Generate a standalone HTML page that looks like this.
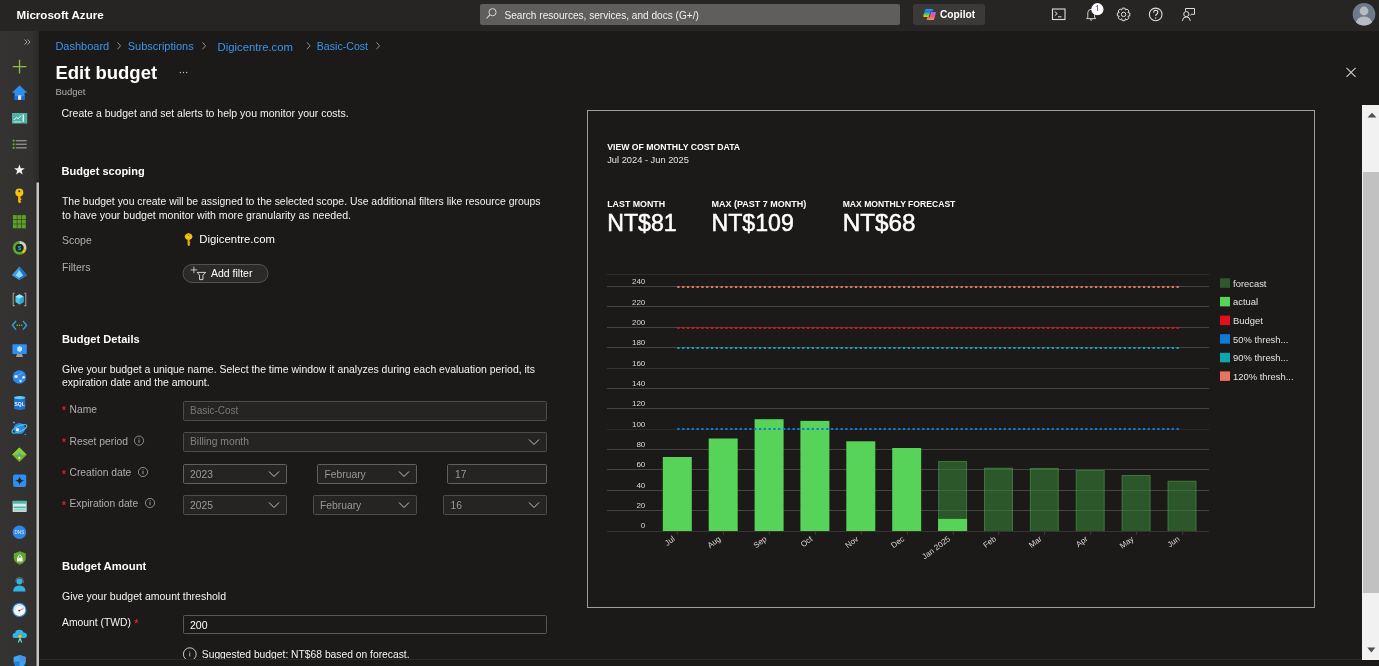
<!DOCTYPE html>
<html><head><meta charset="utf-8"><title>Edit budget - Microsoft Azure</title>
<style>html,body{margin:0;padding:0;background:#1b1a19;overflow:hidden;}svg{display:block;font-family:"Liberation Sans", sans-serif;will-change:transform;}</style></head>
<body><svg width="1379" height="666" viewBox="0 0 1379 666">
<rect x="0" y="0" width="1379" height="666" fill="#1b1a19"/>
<rect x="0" y="0" width="1379" height="31" fill="#262524"/>
<text x="16.5" y="19" font-size="11.6" fill="#fff" font-weight="bold" text-anchor="start" >Microsoft Azure</text>
<rect x="480" y="4" width="420" height="21" rx="2" fill="#605e5c"/>
<circle cx="492.5" cy="12.2" r="3.6" fill="none" stroke="#d8d6d4" stroke-width="1"/>
<line x1="489.8" y1="14.9" x2="486.5" y2="18.5" stroke="#d8d6d4" stroke-width="1.1"/>
<text x="504.5" y="18.5" font-size="10.1" fill="#f2f1f0" font-weight="normal" text-anchor="start" >Search resources, services, and docs (G+/)</text>
<rect x="913" y="4" width="72" height="21" rx="3" fill="#3b3a39"/>
<defs><linearGradient id="cpl" x1="0" y1="0" x2="0" y2="1"><stop offset="0" stop-color="#1aa8f5"/><stop offset="0.3" stop-color="#0f7ae0"/><stop offset="0.6" stop-color="#3cc070"/><stop offset="1" stop-color="#f2d400"/></linearGradient><linearGradient id="cpr" x1="0" y1="0" x2="0" y2="1"><stop offset="0" stop-color="#b05cf0"/><stop offset="0.5" stop-color="#f0509a"/><stop offset="1" stop-color="#f59a40"/></linearGradient></defs>
<path d="M926.2 9 L932 9 Q933 9.2 933.4 10.8 L930.6 11.8 L928.6 17.1 L923.8 17.1 Q923 16.9 923.3 15.6 L925 10.2 Q925.4 9 926.2 9 Z" fill="url(#cpl)"/>
<path d="M931 11.9 L935.3 11.9 Q936.1 12.2 935.9 13.2 L934.1 19.2 Q933.7 20.1 932.8 20.1 L927.3 20.1 Q926.5 19.9 926.8 19 L927.5 17.3 L929.6 17.3 Z" fill="url(#cpr)"/>
<text x="940" y="18.1" font-size="10.2" fill="#fff" font-weight="bold" text-anchor="start" >Copilot</text>
<rect x="1052.5" y="9" width="12.5" height="10.5" fill="none" stroke="#e0dedc" stroke-width="1.1"/>
<path d="M1054.8 11.6 L1057.3 13.6 L1054.8 15.6" fill="none" stroke="#e0dedc" stroke-width="1"/>
<line x1="1058" y1="16.8" x2="1061.5" y2="16.8" stroke="#e0dedc" stroke-width="1"/>
<path d="M1086.5 18.6 L1087.8 17.6 L1087.8 12.5 Q1088.2 9.5 1091 9.3 Q1093.8 9.5 1094.6 12.5 L1094.6 17.6 L1095.9 18.6 Z" fill="none" stroke="#e0dedc" stroke-width="0.9"/>
<path d="M1090 19.5 Q1091.2 21 1092.4 19.5" fill="none" stroke="#e0dedc" stroke-width="1"/>
<circle cx="1097.4" cy="9.2" r="6.1" fill="#fff"/>
<path d="M1097.5 5.3 V11 M1097.5 5.5 L1096 6.6" fill="none" stroke="#4b3a8a" stroke-width="0.75"/>
<polygon points="1127.93,12.57 1129.85,13.00 1129.85,15.80 1127.93,16.23 1127.96,16.17 1129.00,17.83 1127.03,19.80 1125.37,18.76 1125.43,18.73 1125.00,20.65 1122.20,20.65 1121.77,18.73 1121.83,18.76 1120.17,19.80 1118.20,17.83 1119.24,16.17 1119.27,16.23 1117.35,15.80 1117.35,13.00 1119.27,12.57 1119.24,12.63 1118.20,10.97 1120.17,9.00 1121.83,10.04 1121.77,10.07 1122.20,8.15 1125.00,8.15 1125.43,10.07 1125.37,10.04 1127.03,9.00 1129.00,10.97 1127.96,12.63" fill="none" stroke="#e0dedc" stroke-width="1" stroke-linejoin="round"/>
<circle cx="1123.6" cy="14.4" r="2.2" fill="none" stroke="#e0dedc" stroke-width="1"/>
<circle cx="1155.7" cy="14.4" r="6.3" fill="none" stroke="#e0dedc" stroke-width="1.1"/>
<path d="M1153.6 12.6 Q1153.8 10.3 1155.8 10.3 Q1157.9 10.4 1157.9 12.4 Q1157.8 13.8 1156.3 14.5 Q1155.7 14.9 1155.7 16" fill="none" stroke="#e0dedc" stroke-width="1.1"/>
<circle cx="1155.7" cy="18" r="0.7" fill="#e0dedc"/>
<path d="M1185.5 10.8 V8.5 H1194.5 V14.3 H1191.2 L1190.2 15.6" fill="none" stroke="#e0dedc" stroke-width="1"/>
<circle cx="1186.3" cy="14.1" r="2.6" fill="none" stroke="#e0dedc" stroke-width="1"/>
<path d="M1182.4 20.9 Q1182.7 16.9 1186.3 16.9 Q1189.9 16.9 1190.3 20.9" fill="none" stroke="#e0dedc" stroke-width="1"/>
<circle cx="1364" cy="14.3" r="11.3" fill="#6e7a8a"/>
<clipPath id="av"><circle cx="1364" cy="14.3" r="11.3"/></clipPath>
<g clip-path="url(#av)"><circle cx="1364" cy="11" r="4.4" fill="#b8bcc1"/><ellipse cx="1364" cy="24" rx="8.3" ry="7.5" fill="#b8bcc1"/></g>
<defs><linearGradient id="sg" x1="0" x2="1" y1="0" y2="0"><stop offset="0" stop-color="#343331"/><stop offset="0.82" stop-color="#32312f"/><stop offset="1" stop-color="#2a2928"/></linearGradient></defs>
<rect x="0" y="31" width="39" height="635" fill="url(#sg)"/>
<rect x="36.5" y="182.5" width="2.5" height="484" fill="#c8c6c4"/>
<path d="M24.5 39.5 L27 42 L24.5 44.5 M27.5 39.5 L30 42 L27.5 44.5" fill="none" stroke="#a19f9d" stroke-width="1"/>
<path d="M12.7 66.6 H26.4 M19.55 59.7 V73.6" stroke="#8cbf3f" stroke-width="1.3"/>
<path d="M19.6 85.2 L27.3 92.8 L24.6 92.8 L24.6 99.8 L14.6 99.8 L14.6 92.8 L11.9 92.8 Z" fill="#2f8df0"/>
<path d="M14.6 96 L24.6 96 L24.6 99.8 L14.6 99.8 Z" fill="#1d6dd0"/>
<rect x="18.1" y="95.3" width="3" height="4.5" fill="#e8e6e4"/>
<rect x="12" y="113" width="15.2" height="10.5" fill="#4fb3a3"/>
<path d="M13.8 120 L16.5 117.3 L18.2 118.8 L21 115.5" fill="none" stroke="#fff" stroke-width="0.9"/>
<rect x="22.6" y="114.5" width="1.4" height="7.5" fill="#e4f4f0"/><rect x="13.5" y="121.5" width="7.5" height="0.9" fill="#d0ece6"/>
<circle cx="13.6" cy="140.7" r="1.1" fill="#5fb32a"/>
<rect x="15.7" y="140.0" width="11" height="1.4" fill="#8f8d8b"/>
<circle cx="13.6" cy="144.3" r="1.1" fill="#5fb32a"/>
<rect x="15.7" y="143.60000000000002" width="11" height="1.4" fill="#8f8d8b"/>
<circle cx="13.6" cy="147.8" r="1.1" fill="#5fb32a"/>
<rect x="15.7" y="147.10000000000002" width="11" height="1.4" fill="#8f8d8b"/>
<polygon points="19.40,164.40 20.75,168.14 24.73,168.27 21.59,170.71 22.69,174.53 19.40,172.30 16.11,174.53 17.21,170.71 14.07,168.27 18.05,168.14" fill="#f4f3f2"/>
<circle cx="19.3" cy="192.6" r="4" fill="#f5c211"/><circle cx="19.3" cy="191.2" r="1" fill="#302f2e"/>
<path d="M18.1 195.5 L20.5 195.5 L20.5 198.3 L21.8 199.3 L20.5 200.3 L20.5 201 L21.5 202 L19.3 203.2 L18.1 202 Z" fill="#f5b800"/>
<rect x="12.9" y="215.1" width="3.9" height="4" fill="#5da224"/>
<rect x="12.9" y="219.7" width="3.9" height="4" fill="#5da224"/>
<rect x="12.9" y="224.3" width="3.9" height="4" fill="#5da224"/>
<rect x="17.4" y="215.1" width="3.9" height="4" fill="#5da224"/>
<rect x="17.4" y="219.7" width="3.9" height="4" fill="#5da224"/>
<rect x="17.4" y="224.3" width="3.9" height="4" fill="#5da224"/>
<rect x="21.9" y="215.1" width="3.9" height="4" fill="#5da224"/>
<rect x="21.9" y="219.7" width="3.9" height="4" fill="#5da224"/>
<rect x="21.9" y="224.3" width="3.9" height="4" fill="#5da224"/>
<circle cx="19.6" cy="247.8" r="5.5" fill="none" stroke="#5ba82a" stroke-width="2.8"/>
<path d="M19.6 242.3 A5.5 5.5 0 0 1 24.9 249.2" fill="none" stroke="#d0cecc" stroke-width="2.8"/>
<path d="M24.9 249.2 A5.5 5.5 0 0 1 22.5 252.4" fill="none" stroke="#f2c200" stroke-width="2.8"/>
<circle cx="19.6" cy="247.8" r="3.9" fill="#1d2a2a"/>
<text x="19.6" y="250" font-size="5.5" fill="#2ec0c0" text-anchor="middle" font-weight="bold">$</text>
<path d="M19.4 266.5 L27 275.3 L19.4 280 L11.8 275.3 Z" fill="#3ea0e6"/>
<path d="M19.4 266.5 L27 275.3 L19.4 280 Z" fill="#1f6fc8"/>
<path d="M19.4 270 L23.2 275.5 L19.4 277.8 L15.6 275.5 Z" fill="#8fdcf5"/>
<path d="M14.8 293.2 L13.2 293.2 L13.2 305.6 L14.8 305.6 M24.2 293.2 L25.8 293.2 L25.8 305.6 L24.2 305.6" fill="none" stroke="#9b9997" stroke-width="1.1"/>
<path d="M19.5 294.2 L23.5 296.5 L23.5 302 L19.5 304.5 L15.5 302 L15.5 296.5 Z" fill="#50c8ee"/>
<path d="M15.5 296.5 L19.5 298.8 L23.5 296.5 L19.5 294.2 Z" fill="#9be6f8"/>
<path d="M19.5 298.8 L23.5 296.5 L23.5 302 L19.5 304.5 Z" fill="#2ea8dc"/>
<path d="M16 321 L12.4 325.3 L16 329.6 M23 321 L26.6 325.3 L23 329.6" fill="none" stroke="#2aa3ea" stroke-width="1.4"/>
<circle cx="17.2" cy="325.3" r="0.8" fill="#86c03a"/>
<circle cx="19.5" cy="325.3" r="0.8" fill="#86c03a"/>
<circle cx="21.8" cy="325.3" r="0.8" fill="#86c03a"/>
<rect x="12.4" y="344.2" width="14.4" height="9.8" rx="0.8" fill="#2f8ff0"/>
<path d="M17 354 L22 354 L23 357 L16 357 Z" fill="#a19f9d"/>
<path d="M19.6 346 L22 347.4 L22 350.5 L19.6 352 L17.2 350.5 L17.2 347.4 Z" fill="#b8eaf8"/>
<circle cx="19.4" cy="377" r="6.8" fill="#2d86e8"/>
<path d="M16.2 376.5 L22.5 372.5 M16.2 376.5 L20.5 380.8 L23.8 376.8" fill="none" stroke="#8fc8f8" stroke-width="0.6"/>
<circle cx="16" cy="376.5" r="1.6" fill="#e8f2fc"/><circle cx="23.6" cy="377.3" r="1.2" fill="#e8f2fc"/><circle cx="20.5" cy="381.2" r="1.1" fill="#e8f2fc"/>
<path d="M14 397.5 L14 408.5 Q19.6 411.5 25.3 408.5 L25.3 397.5 Z" fill="#1f6fd0"/>
<ellipse cx="19.65" cy="397.6" rx="5.65" ry="1.6" fill="#5ad0f0"/>
<text x="19.6" y="406" font-size="5" fill="#f4f4f4" text-anchor="middle" font-weight="bold">SQL</text>
<circle cx="19.4" cy="428.5" r="5.6" fill="#2e86e6"/>
<ellipse cx="19.4" cy="428.8" rx="8" ry="2.8" transform="rotate(-25 19.4 428.8)" fill="none" stroke="#45c0ea" stroke-width="1.1"/>
<circle cx="17.5" cy="429.8" r="1.8" fill="#e8f2fc"/><circle cx="14" cy="422.5" r="0.9" fill="#45c0ea"/><circle cx="25.2" cy="434.4" r="0.7" fill="#45c0ea"/>
<path d="M19.4 447.5 L26.7 454.8 L19.4 462.1 L12.1 454.8 Z" fill="#6fb42c"/>
<path d="M19.4 447.5 L26.7 454.8 L19.4 454.8 L12.1 454.8 Z" fill="#8ccc3a"/>
<circle cx="19.4" cy="454.2" r="1.5" fill="#4aa0f0"/><circle cx="19.4" cy="457.8" r="1.1" fill="#f0f0f0"/>
<rect x="13.1" y="474.5" width="13.1" height="12.4" rx="1.8" fill="#2f8ff0"/>
<path d="M19.65 476.5 Q20.2 480.2 24.2 480.7 Q20.2 481.2 19.65 485 Q19.1 481.2 15.1 480.7 Q19.1 480.2 19.65 476.5 Z" fill="#252423"/>
<rect x="12.7" y="500.9" width="13.9" height="11" fill="#e8e6e4"/>
<rect x="12.7" y="500.9" width="13.9" height="2.8" fill="#3cbfae"/>
<rect x="13.6" y="506.5" width="12.1" height="1.6" fill="#3cbfae"/><rect x="13.6" y="508.6" width="12.1" height="2.3" fill="#9ad8cf"/>
<circle cx="19.4" cy="532.2" r="6.8" fill="#2d86e8"/>
<text x="19.4" y="534" font-size="4.6" fill="#e6f0fa" text-anchor="middle">DNS</text>
<path d="M19.8 551.3 L25.8 553.5 L25.8 558.5 Q25.3 562.5 19.8 564.8 Q14.3 562.5 13.8 558.5 L13.8 553.5 Z" fill="#5fa82a"/>
<rect x="17" y="557.5" width="5.6" height="4" fill="#f4f4f4"/><path d="M18.2 557.5 L18.2 556 Q19.8 553.8 21.4 556 L21.4 557.5" fill="none" stroke="#f4f4f4" stroke-width="0.9"/>
<circle cx="19.4" cy="581.5" r="3" fill="#32b4e0"/>
<path d="M13.1 591.6 Q13.3 585.8 19.4 585.6 Q25.5 585.8 25.5 591.6 Z" fill="#32b4e0"/>
<path d="M15.6 581.5 Q15.8 577.5 19.4 577.4 Q23.2 577.5 23.4 581.5 L23.4 583" fill="none" stroke="#8a8886" stroke-width="0.7"/>
<circle cx="19.4" cy="610" r="6.6" fill="#f8f8f8" stroke="#2b8ae8" stroke-width="1.1"/>
<path d="M14.8 610 A4.6 4.6 0 0 1 23.5 608" fill="none" stroke="#8cc8f0" stroke-width="1" stroke-dasharray="1 0.8"/>
<line x1="19.2" y1="610.6" x2="23.5" y2="608.6" stroke="#e8404a" stroke-width="0.8"/><circle cx="19.2" cy="610.6" r="0.9" fill="#333"/>
<path d="M14.5 638 Q12.2 637.8 12.6 635 Q13 632.8 15.2 633 Q15.5 629.6 19.5 629.7 Q23 629.8 23.5 632.6 Q26.9 632.8 27 635.4 Q26.9 638 24.5 638 Z" fill="#32b6e6"/>
<path d="M19.2 638 L17.8 642.6 L19 642.6 L20 640 L21 642.6 L22.2 642.6 L20.8 638 Z" fill="#5ee0c8"/>
<circle cx="20" cy="636.3" r="2" fill="#f5c400" stroke="#1f8ee0" stroke-width="0.5"/>
<path d="M19.65 654.9 L25.7 657 L25.7 662 Q25.3 666 19.65 668.5 Q14 666 13.6 662 L13.6 657 Z" fill="#3aa8ee"/>
<path d="M19.65 654.9 L25.7 657 L25.7 661.5 L19.65 661.5 Z" fill="#4f8ee8"/><path d="M13.6 661.5 L19.65 661.5 L19.65 668.5 Q14 666 13.6 662 Z" fill="#2a78d8"/>
<text x="55.4" y="50.3" font-size="11" fill="#3c95ec" font-weight="normal" text-anchor="start" >Dashboard</text>
<text x="127.7" y="50.3" font-size="11" fill="#3c95ec" font-weight="normal" text-anchor="start" >Subscriptions</text>
<text x="217.6" y="51.3" font-size="11.3" fill="#3c95ec" font-weight="normal" text-anchor="start" >Digicentre.com</text>
<text x="316.8" y="50.3" font-size="10.6" fill="#3c95ec" font-weight="normal" text-anchor="start" >Basic-Cost</text>
<path d="M117.5 42.3 L120.5 45.8 L117.5 49.3" fill="none" stroke="#a19f9d" stroke-width="0.9"/>
<path d="M202.5 42.3 L205.5 45.8 L202.5 49.3" fill="none" stroke="#a19f9d" stroke-width="0.9"/>
<path d="M307 42.3 L310 45.8 L307 49.3" fill="none" stroke="#a19f9d" stroke-width="0.9"/>
<path d="M376.5 42.3 L379.5 45.8 L376.5 49.3" fill="none" stroke="#a19f9d" stroke-width="0.9"/>
<text x="55.4" y="78.9" font-size="18.5" fill="#fff" font-weight="bold" text-anchor="start" >Edit budget</text>
<circle cx="180.3" cy="72.5" r="0.65" fill="#c8c6c4"/>
<circle cx="183.5" cy="72.5" r="0.65" fill="#c8c6c4"/>
<circle cx="186.7" cy="72.5" r="0.65" fill="#c8c6c4"/>
<text x="55.4" y="95" font-size="9.5" fill="#b0aeac" font-weight="normal" text-anchor="start" >Budget</text>
<path d="M1346.5 67.8 L1355.6 76.9 M1355.6 67.8 L1346.5 76.9" stroke="#d0cecc" stroke-width="1.1"/>
<text x="61.5" y="117.4" font-size="10.5" fill="#f4f3f2" font-weight="normal" text-anchor="start" >Create a budget and set alerts to help you monitor your costs.</text>
<text x="61.5" y="175" font-size="11" fill="#fff" font-weight="bold" text-anchor="start" >Budget scoping</text>
<text x="62" y="205.2" font-size="10.43" fill="#f4f3f2" font-weight="normal" text-anchor="start" >The budget you create will be assigned to the selected scope. Use additional filters like resource groups</text>
<text x="62" y="219" font-size="10.62" fill="#f4f3f2" font-weight="normal" text-anchor="start" >to have your budget monitor with more granularity as needed.</text>
<text x="62" y="244.4" font-size="10.5" fill="#b0aeac" font-weight="normal" text-anchor="start" >Scope</text>
<path d="M188.6 233 L191.4 234.2 L192.6 236.6 L191.4 239 L188.6 240.2 L185.8 239 L184.6 236.6 L185.8 234.2 Z" fill="#f5c211"/><circle cx="188.6" cy="235.3" r="0.8" fill="#8a6a00"/>
<path d="M187.6 239.5 L189.6 239.5 L189.6 242 L190.6 242.8 L189.6 243.6 L189.6 244.2 L190.4 245 L188.6 246 L187.6 245 Z" fill="#f0b400"/>
<text x="199.3" y="243.3" font-size="11.35" fill="#fff" font-weight="normal" text-anchor="start" >Digicentre.com</text>
<text x="62" y="270.5" font-size="10.5" fill="#b0aeac" font-weight="normal" text-anchor="start" >Filters</text>
<rect x="183" y="264.5" width="85" height="18" rx="9" fill="#2b2a29" stroke="#5a5856" stroke-width="0.9"/>
<path d="M193.9 266.6 V273.2 M190.6 269.9 H197.2" stroke="#e6e4e2" stroke-width="0.8"/>
<path d="M197.2 272.4 L205.8 272.4 L202.9 275.2 L202.9 279.6 L199.5 279.6 L199.5 275.2 Z" fill="none" stroke="#e6e4e2" stroke-width="0.9" stroke-linejoin="round"/>
<text x="211" y="277" font-size="10.5" fill="#fff" font-weight="normal" text-anchor="start" >Add filter</text>
<text x="62" y="343.1" font-size="11.1" fill="#fff" font-weight="bold" text-anchor="start" >Budget Details</text>
<text x="62" y="372.9" font-size="10.46" fill="#f4f3f2" font-weight="normal" text-anchor="start" >Give your budget a unique name. Select the time window it analyzes during each evaluation period, its</text>
<text x="62" y="385.9" font-size="10.5" fill="#f4f3f2" font-weight="normal" text-anchor="start" >expiration date and the amount.</text>
<text x="62" y="414" font-size="10" fill="#e81c2a" font-weight="bold">*</text>
<text x="69.5" y="412.7" font-size="10.3" fill="#b0aeac" font-weight="normal" text-anchor="start" >Name</text>
<rect x="183.5" y="401.5" width="363" height="19" rx="1" fill="#252423" stroke="#4e4c4a" stroke-width="1"/>
<text x="190" y="413.6" font-size="10" fill="#7a7876" font-weight="normal" text-anchor="start" >Basic-Cost</text>
<text x="62" y="446" font-size="10" fill="#e81c2a" font-weight="bold">*</text>
<text x="69.5" y="444.6" font-size="10.3" fill="#b0aeac" font-weight="normal" text-anchor="start" >Reset period</text>
<circle cx="139" cy="440.6" r="4.6" fill="none" stroke="#b8b6b4" stroke-width="0.7"/>
<rect x="138.6" y="439.6" width="0.8" height="3.2" fill="#b8b6b4"/><circle cx="139" cy="438.3" r="0.5" fill="#b8b6b4"/>
<rect x="183.5" y="432.5" width="363" height="19" rx="1" fill="#252423" stroke="#4e4c4a" stroke-width="1"/>
<text x="190" y="445.2" font-size="10.3" fill="#858381" font-weight="normal" text-anchor="start" >Billing month</text>
<path d="M529 439.5 L534 444.5 L539 439.5" fill="none" stroke="#c8c6c4" stroke-width="1"/>
<text x="62" y="477.5" font-size="10" fill="#e81c2a" font-weight="bold">*</text>
<text x="69.5" y="476" font-size="10.3" fill="#b0aeac" font-weight="normal" text-anchor="start" >Creation date</text>
<circle cx="143" cy="472" r="4.6" fill="none" stroke="#b8b6b4" stroke-width="0.7"/>
<rect x="142.6" y="471.0" width="0.8" height="3.2" fill="#b8b6b4"/><circle cx="143" cy="469.7" r="0.5" fill="#b8b6b4"/>
<rect x="183.5" y="464.5" width="103" height="19" rx="1" fill="#252423" stroke="#62605e" stroke-width="1"/>
<text x="190" y="478.2" font-size="10.3" fill="#9a9896" font-weight="normal" text-anchor="start" >2023</text>
<path d="M269 471.5 L274 476.5 L279 471.5" fill="none" stroke="#c8c6c4" stroke-width="1"/>
<rect x="317.5" y="464.5" width="99" height="19" rx="1" fill="#252423" stroke="#62605e" stroke-width="1"/>
<text x="324.5" y="478.2" font-size="10.3" fill="#9a9896" font-weight="normal" text-anchor="start" >February</text>
<path d="M399 471.5 L404 476.5 L409 471.5" fill="none" stroke="#c8c6c4" stroke-width="1"/>
<rect x="447.5" y="464.5" width="99" height="19" rx="1" fill="#252423" stroke="#62605e" stroke-width="1"/>
<text x="455" y="478.2" font-size="10.3" fill="#9a9896" font-weight="normal" text-anchor="start" >17</text>
<text x="62" y="508.5" font-size="10" fill="#e81c2a" font-weight="bold">*</text>
<text x="69.5" y="506.8" font-size="10.3" fill="#b0aeac" font-weight="normal" text-anchor="start" >Expiration date</text>
<circle cx="150" cy="503" r="4.6" fill="none" stroke="#b8b6b4" stroke-width="0.7"/>
<rect x="149.6" y="502.0" width="0.8" height="3.2" fill="#b8b6b4"/><circle cx="150" cy="500.7" r="0.5" fill="#b8b6b4"/>
<rect x="183.5" y="495.5" width="103" height="19" rx="1" fill="#252423" stroke="#4e4c4a" stroke-width="1"/>
<text x="190" y="509.3" font-size="10.3" fill="#9a9896" font-weight="normal" text-anchor="start" >2025</text>
<path d="M269 502.5 L274 507.5 L279 502.5" fill="none" stroke="#c8c6c4" stroke-width="1"/>
<rect x="313.5" y="495.5" width="103" height="19" rx="1" fill="#252423" stroke="#4e4c4a" stroke-width="1"/>
<text x="320" y="509.3" font-size="10.3" fill="#9a9896" font-weight="normal" text-anchor="start" >February</text>
<path d="M399 502.5 L404 507.5 L409 502.5" fill="none" stroke="#c8c6c4" stroke-width="1"/>
<rect x="443.5" y="495.5" width="103" height="19" rx="1" fill="#252423" stroke="#4e4c4a" stroke-width="1"/>
<text x="450.5" y="509.3" font-size="10.3" fill="#9a9896" font-weight="normal" text-anchor="start" >16</text>
<path d="M529 502.5 L534 507.5 L539 502.5" fill="none" stroke="#c8c6c4" stroke-width="1"/>
<text x="62" y="570.2" font-size="11.3" fill="#fff" font-weight="bold" text-anchor="start" >Budget Amount</text>
<text x="62" y="599.6" font-size="10.5" fill="#f4f3f2" font-weight="normal" text-anchor="start" >Give your budget amount threshold</text>
<text x="62" y="625.7" font-size="10.35" fill="#f4f3f2" font-weight="normal" text-anchor="start" >Amount (TWD)</text>
<text x="134.5" y="627" font-size="10" fill="#e81c2a" font-weight="bold">*</text>
<rect x="183.5" y="615.5" width="363" height="18" rx="1" fill="#1b1a19" stroke="#5a5856" stroke-width="1"/>
<text x="190" y="628.5" font-size="10.5" fill="#fff" font-weight="normal" text-anchor="start" >200</text>
<circle cx="189.8" cy="654.2" r="6.4" fill="none" stroke="#e0dedc" stroke-width="0.9"/>
<rect x="189.4" y="653.2" width="0.8" height="3.2" fill="#e0dedc"/><circle cx="189.8" cy="651.9000000000001" r="0.5" fill="#e0dedc"/>
<text x="201.8" y="657.7" font-size="10.3" fill="#f4f3f2" font-weight="normal" text-anchor="start" >Suggested budget: NT$68 based on forecast.</text>
<rect x="39" y="659" width="1340" height="7" fill="#1b1a19"/>
<rect x="39" y="659" width="1323" height="1" fill="#2a2928"/>
<rect x="587.5" y="110.5" width="727" height="497" fill="none" stroke="#a09e9c" stroke-width="1"/>
<text x="607.2" y="149.8" font-size="8.7" fill="#fff" font-weight="bold" text-anchor="start" >VIEW OF MONTHLY COST DATA</text>
<text x="607.2" y="162.5" font-size="9.3" fill="#e6e4e2" font-weight="normal" text-anchor="start" >Jul 2024 - Jun 2025</text>
<text x="607.2" y="207.2" font-size="8.85" fill="#fff" font-weight="bold" text-anchor="start" >LAST MONTH</text>
<text x="607.2" y="230.8" font-size="23.8" fill="#fff" font-weight="normal" text-anchor="start" stroke="#fff" stroke-width="0.5" textLength="69.5" lengthAdjust="spacingAndGlyphs">NT$81</text>
<text x="711.5" y="207.2" font-size="9.0" fill="#fff" font-weight="bold" text-anchor="start" >MAX (PAST 7 MONTH)</text>
<text x="711.5" y="230.8" font-size="23.8" fill="#fff" font-weight="normal" text-anchor="start" stroke="#fff" stroke-width="0.5" textLength="82.3" lengthAdjust="spacingAndGlyphs">NT$109</text>
<text x="842.7" y="207.2" font-size="8.6" fill="#fff" font-weight="bold" text-anchor="start" >MAX MONTHLY FORECAST</text>
<text x="842.7" y="230.8" font-size="23.8" fill="#fff" font-weight="normal" text-anchor="start" stroke="#fff" stroke-width="0.5" textLength="72.8" lengthAdjust="spacingAndGlyphs">NT$68</text>
<rect x="607" y="274" width="602" height="1" fill="#2e2d2c"/>
<rect x="607" y="531" width="602" height="1" fill="#454443"/>
<text x="645.3" y="528.4" font-size="8" fill="#dcdad8" font-weight="normal" text-anchor="end" >0</text>
<rect x="607" y="510" width="602" height="1" fill="#454443"/>
<text x="645.3" y="508.1" font-size="8" fill="#dcdad8" font-weight="normal" text-anchor="end" >20</text>
<rect x="607" y="490" width="602" height="1" fill="#454443"/>
<text x="645.3" y="487.7" font-size="8" fill="#dcdad8" font-weight="normal" text-anchor="end" >40</text>
<rect x="607" y="469" width="602" height="1" fill="#454443"/>
<text x="645.3" y="467.4" font-size="8" fill="#dcdad8" font-weight="normal" text-anchor="end" >60</text>
<rect x="607" y="449" width="602" height="1" fill="#454443"/>
<text x="645.3" y="447.0" font-size="8" fill="#dcdad8" font-weight="normal" text-anchor="end" >80</text>
<rect x="607" y="429" width="602" height="1" fill="#2a2928"/>
<text x="645.3" y="426.7" font-size="8" fill="#dcdad8" font-weight="normal" text-anchor="end" >100</text>
<rect x="607" y="408" width="602" height="1" fill="#454443"/>
<text x="645.3" y="406.3" font-size="8" fill="#dcdad8" font-weight="normal" text-anchor="end" >120</text>
<rect x="607" y="388" width="602" height="1" fill="#454443"/>
<text x="645.3" y="385.9" font-size="8" fill="#dcdad8" font-weight="normal" text-anchor="end" >140</text>
<rect x="607" y="368" width="602" height="1" fill="#353433"/>
<text x="645.3" y="365.6" font-size="8" fill="#dcdad8" font-weight="normal" text-anchor="end" >160</text>
<rect x="607" y="347" width="602" height="1" fill="#454443"/>
<text x="645.3" y="345.3" font-size="8" fill="#dcdad8" font-weight="normal" text-anchor="end" >180</text>
<rect x="607" y="327" width="602" height="1" fill="#454443"/>
<text x="645.3" y="324.9" font-size="8" fill="#dcdad8" font-weight="normal" text-anchor="end" >200</text>
<rect x="607" y="306" width="602" height="1" fill="#454443"/>
<text x="645.3" y="304.6" font-size="8" fill="#dcdad8" font-weight="normal" text-anchor="end" >220</text>
<rect x="607" y="286" width="602" height="1" fill="#454443"/>
<text x="645.3" y="284.2" font-size="8" fill="#dcdad8" font-weight="normal" text-anchor="end" >240</text>
<rect x="662.8" y="457" width="29" height="74.0" fill="#57d35a"/>
<rect x="708.7" y="438.5" width="29" height="92.5" fill="#57d35a"/>
<rect x="754.6" y="419.2" width="29" height="111.8" fill="#57d35a"/>
<rect x="800.4" y="420.9" width="29" height="110.1" fill="#57d35a"/>
<rect x="846.3" y="441.3" width="29" height="89.7" fill="#57d35a"/>
<rect x="892.2" y="448" width="29" height="83.0" fill="#57d35a"/>
<rect x="938.6" y="461.5" width="28" height="70.0" fill="#3a8a3a" fill-opacity="0.55" stroke="#4c9c4b" stroke-opacity="0.6" stroke-width="1"/>
<rect x="938.1" y="518.9" width="29" height="12.1" fill="#57d35a"/>
<rect x="984.5" y="468.2" width="28" height="63.3" fill="#3a8a3a" fill-opacity="0.55" stroke="#4c9c4b" stroke-opacity="0.6" stroke-width="1"/>
<rect x="1030.3" y="468.5" width="28" height="63.0" fill="#3a8a3a" fill-opacity="0.55" stroke="#4c9c4b" stroke-opacity="0.6" stroke-width="1"/>
<rect x="1076.2" y="470.4" width="28" height="61.1" fill="#3a8a3a" fill-opacity="0.55" stroke="#4c9c4b" stroke-opacity="0.6" stroke-width="1"/>
<rect x="1122.1" y="475.5" width="28" height="56.0" fill="#3a8a3a" fill-opacity="0.55" stroke="#4c9c4b" stroke-opacity="0.6" stroke-width="1"/>
<rect x="1168.0" y="481.2" width="28" height="50.3" fill="#3a8a3a" fill-opacity="0.55" stroke="#4c9c4b" stroke-opacity="0.6" stroke-width="1"/>
<rect x="607" y="531" width="602" height="1" fill="#353433"/>
<rect x="677" y="532" width="1" height="2.5" fill="#3f3e3d"/>
<text x="675.5" y="540" font-size="8" fill="#d8d6d4" text-anchor="end" transform="rotate(-37 675.5 540)">Jul</text>
<rect x="723" y="532" width="1" height="2.5" fill="#3f3e3d"/>
<text x="721.4" y="540" font-size="8" fill="#d8d6d4" text-anchor="end" transform="rotate(-37 721.4 540)">Aug</text>
<rect x="769" y="532" width="1" height="2.5" fill="#3f3e3d"/>
<text x="767.3" y="540" font-size="8" fill="#d8d6d4" text-anchor="end" transform="rotate(-37 767.3 540)">Sep</text>
<rect x="815" y="532" width="1" height="2.5" fill="#3f3e3d"/>
<text x="813.1" y="540" font-size="8" fill="#d8d6d4" text-anchor="end" transform="rotate(-37 813.1 540)">Oct</text>
<rect x="861" y="532" width="1" height="2.5" fill="#3f3e3d"/>
<text x="859.0" y="540" font-size="8" fill="#d8d6d4" text-anchor="end" transform="rotate(-37 859.0 540)">Nov</text>
<rect x="907" y="532" width="1" height="2.5" fill="#3f3e3d"/>
<text x="904.9" y="540" font-size="8" fill="#d8d6d4" text-anchor="end" transform="rotate(-37 904.9 540)">Dec</text>
<rect x="953" y="532" width="1" height="2.5" fill="#3f3e3d"/>
<text x="950.8" y="540" font-size="8" fill="#d8d6d4" text-anchor="end" transform="rotate(-37 950.8 540)">Jan 2025</text>
<rect x="998" y="532" width="1" height="2.5" fill="#3f3e3d"/>
<text x="996.7" y="540" font-size="8" fill="#d8d6d4" text-anchor="end" transform="rotate(-37 996.7 540)">Feb</text>
<rect x="1044" y="532" width="1" height="2.5" fill="#3f3e3d"/>
<text x="1042.5" y="540" font-size="8" fill="#d8d6d4" text-anchor="end" transform="rotate(-37 1042.5 540)">Mar</text>
<rect x="1090" y="532" width="1" height="2.5" fill="#3f3e3d"/>
<text x="1088.4" y="540" font-size="8" fill="#d8d6d4" text-anchor="end" transform="rotate(-37 1088.4 540)">Apr</text>
<rect x="1136" y="532" width="1" height="2.5" fill="#3f3e3d"/>
<text x="1134.3" y="540" font-size="8" fill="#d8d6d4" text-anchor="end" transform="rotate(-37 1134.3 540)">May</text>
<rect x="1182" y="532" width="1" height="2.5" fill="#3f3e3d"/>
<text x="1180.2" y="540" font-size="8" fill="#d8d6d4" text-anchor="end" transform="rotate(-37 1180.2 540)">Jun</text>
<line x1="677.3" y1="287" x2="1180.5" y2="287" stroke="#e8735f" stroke-width="2" stroke-dasharray="2.3 2.5"/>
<line x1="677.3" y1="328" x2="1180.5" y2="328" stroke="#e3101c" stroke-width="2" stroke-dasharray="2.3 2.5"/>
<line x1="677.3" y1="348" x2="1180.5" y2="348" stroke="#0fa5b5" stroke-width="2" stroke-dasharray="2.3 2.5"/>
<line x1="677.3" y1="429" x2="1180.5" y2="429" stroke="#0f7ad8" stroke-width="2" stroke-dasharray="2.3 2.5"/>
<rect x="1220" y="278.3" width="10" height="9.5" fill="#2d5a2d"/>
<text x="1233.1" y="286.6" font-size="9.4" fill="#e6e4e2" font-weight="normal" text-anchor="start" >forecast</text>
<rect x="1220" y="296.9" width="10" height="9.5" fill="#57d35a"/>
<text x="1233.1" y="305.2" font-size="9.4" fill="#e6e4e2" font-weight="normal" text-anchor="start" >actual</text>
<rect x="1220" y="315.6" width="10" height="9.5" fill="#e3101c"/>
<text x="1233.1" y="323.9" font-size="9.4" fill="#e6e4e2" font-weight="normal" text-anchor="start" >Budget</text>
<rect x="1220" y="334.2" width="10" height="9.5" fill="#0f7ad8"/>
<text x="1233.1" y="342.5" font-size="9.4" fill="#e6e4e2" font-weight="normal" text-anchor="start" >50% thresh...</text>
<rect x="1220" y="352.8" width="10" height="9.5" fill="#0ea5b0"/>
<text x="1233.1" y="361.1" font-size="9.4" fill="#e6e4e2" font-weight="normal" text-anchor="start" >90% thresh...</text>
<rect x="1220" y="371.4" width="10" height="9.5" fill="#e8735f"/>
<text x="1233.1" y="379.8" font-size="9.4" fill="#e6e4e2" font-weight="normal" text-anchor="start" >120% thresh...</text>
<rect x="1362" y="105" width="17" height="555" fill="#f1f1f1"/>
<rect x="1363" y="172" width="16" height="421" fill="#c1c1c1"/>
<path d="M1367.5 117.5 L1372 112.8 L1376.5 117.5 Z" fill="#505050"/>
<path d="M1367.3 647.6 L1375.4 647.6 L1371.35 652.4 Z" fill="#505050"/>
</svg></body></html>
